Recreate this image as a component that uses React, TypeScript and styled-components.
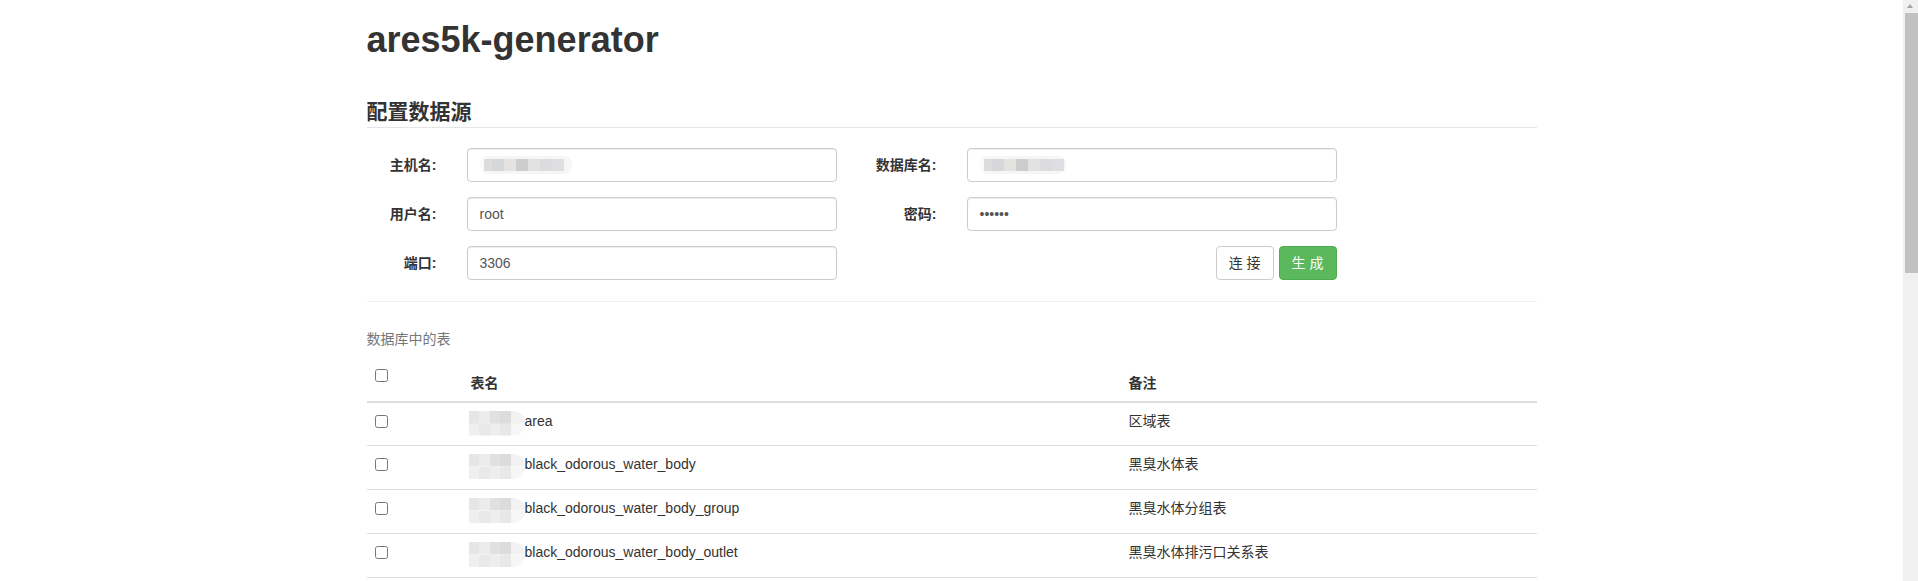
import React from "react";
import styled, { createGlobalStyle } from "styled-components";

const GlobalStyle = createGlobalStyle`
  * { box-sizing: border-box; }
  html, body { margin: 0; padding: 0; background: #fff; }
  body {
    font-family: "Liberation Sans", "Noto Sans CJK SC", sans-serif;
    font-size: 14px;
    line-height: 1.42857143;
    color: #333;
  }
`;

const Page = styled.div`
  padding-right: 15px;
`;

const ScrollTrack = styled.div`
  position: fixed;
  top: 0;
  right: 0;
  width: 15px;
  height: 100vh;
  background: #f0f0f0;
  z-index: 10;
`;

const ScrollArrow = styled.div`
  position: absolute;
  top: 4px;
  left: 4px;
  width: 0;
  height: 0;
  border-left: 3.5px solid transparent;
  border-right: 3.5px solid transparent;
  border-bottom: 4px solid #a3a3a3;
`;

const ScrollThumb = styled.div`
  position: absolute;
  top: 13px;
  left: 2px;
  right: 0;
  height: 260px;
  background: #c1c1c1;
`;

const Container = styled.div`
  width: 1170px;
  margin: 0 auto;
  padding-bottom: 20px;
`;

const Title = styled.h1`
  margin: 20px 0 10px;
  font-size: 36px;
  line-height: 1.1;
  font-weight: 700;
  color: #333;
`;

const Fieldset = styled.fieldset`
  margin: 37px 0 0;
  padding: 0;
  border: 0;
  min-width: 0;
`;

const Legend = styled.legend`
  display: block;
  width: 100%;
  padding: 0;
  margin-bottom: 20px;
  font-size: 21px;
  line-height: inherit;
  font-weight: 700;
  color: #333;
  border: 0;
  border-bottom: 1px solid #e5e5e5;
`;

const FormGrid = styled.div`
  display: grid;
  grid-template-columns: 70px 370px 70px 370px;
  column-gap: 30px;
  row-gap: 15px;
`;

const Label = styled.label`
  padding-top: 7px;
  text-align: right;
  font-weight: 700;
  white-space: nowrap;
`;

const Field = styled.div`
  position: relative;
`;

const Input = styled.input`
  display: block;
  width: 100%;
  height: 34px;
  padding: 6px 12px;
  font-family: inherit;
  font-size: 14px;
  line-height: 1.42857143;
  color: #555;
  background: #fff;
  border: 1px solid #ccc;
  border-radius: 4px;
  box-shadow: inset 0 1px 1px rgba(0, 0, 0, 0.075);
  outline: none;
`;

const InputMosaic = styled.span<{ $w: number }>`
  position: absolute;
  left: 13px;
  top: 8px;
  width: ${(p) => p.$w}px;
  height: 18px;
  border-radius: 8px;
  background:
    linear-gradient(90deg, #fafafa 0 4px, #dcdcdc 4px 12px, #d6d7da 12px 24px, #e5e3e0 24px 36px, #cdcdcd 36px 48px, #e2e2e2 48px 60px, #dcdbde 60px 72px, #dddfe2 72px 84px, #f6f6f6 84px) center / 100% 12px no-repeat,
    #f6f6f6;
  filter: blur(0.4px);
`;

const Actions = styled.div`
  grid-column: 3 / 5;
  display: flex;
  justify-content: flex-end;
  gap: 5px;
`;

const Button = styled.button<{ $variant?: "default" | "success" }>`
  height: 34px;
  padding: 6px 12px;
  font-family: inherit;
  font-size: 14px;
  line-height: 1.42857143;
  border-radius: 4px;
  border: 1px solid ${(p) => (p.$variant === "success" ? "#4cae4c" : "#ccc")};
  background: ${(p) => (p.$variant === "success" ? "#5cb85c" : "#fff")};
  color: ${(p) => (p.$variant === "success" ? "#fff" : "#333")};
  cursor: pointer;
  white-space: pre;
`;

const Rule = styled.hr`
  margin: 21px 0 19px;
  border: 0;
  border-top: 1px solid #eee;
`;

const Table = styled.table`
  width: 100%;
  border-collapse: collapse;
  border-spacing: 0;
`;

const Caption = styled.caption`
  padding: 8px 0;
  color: #777;
  text-align: left;
`;

const Th = styled.th<{ $w?: number }>`
  width: ${(p) => (p.$w ? `${p.$w}px` : "auto")};
  height: 45px;
  padding: 8px;
  text-align: left;
  vertical-align: bottom;
  font-weight: 700;
  border-bottom: 2px solid #ddd;
`;

const HeadCheckCell = styled(Th)`
  vertical-align: top;
`;

const Td = styled.td`
  height: 44px;
  padding: 8px;
  vertical-align: top;
  border-top: 1px solid #ddd;
`;

const Check = styled.input`
  margin: 4px 0 0 0;
  width: 13px;
  height: 13px;
  vertical-align: top;
`;

const NameWrap = styled.span`
  display: flex;
  align-items: flex-start;
  height: 20px;
`;

const Mosaic = styled.span`
  flex: none;
  display: block;
  width: 56px;
  height: 25px;
  margin-left: -2px;
  border-radius: 0 12px 12px 0;
  background:
    linear-gradient(90deg, #e6e6e6 0 10px, #ececec 10px 21px, #e1e1e1 21px 31px, #dcdcdc 31px 42px, #f2f2f2 42px) top / 100% 50% no-repeat,
    linear-gradient(90deg, #efefef 0 10px, #e9e9e9 10px 21px, #eeeeee 21px 31px, #e8e8e8 31px 42px, #f6f6f6 42px) bottom / 100% 50% no-repeat;
  filter: blur(0.5px);
`;

const rows: [string, string][] = [
  ["area", "区域表"],
  ["black_odorous_water_body", "黑臭水体表"],
  ["black_odorous_water_body_group", "黑臭水体分组表"],
  ["black_odorous_water_body_outlet", "黑臭水体排污口关系表"],
  ["black_odorous_water_body_photo", "黑臭水体照片表"],
  ["black_odorous_water_body_river", "黑臭水体河流关系表"],
  ["dict", "字典表"],
  ["dict_type", "字典类型表"],
  ["inspection", "巡查表"],
  ["inspection_record", "巡查记录表"],
  ["monitor_data", "监测数据表"],
  ["monitor_point", "监测点表"],
  ["outlet", "排污口表"],
  ["river", "河流表"],
  ["sys_menu", "菜单表"],
  ["sys_role", "角色表"],
  ["sys_user", "用户表"],
  ["water_quality", "水质表"],
];

export default function App() {
  return (
    <>
      <GlobalStyle />
      <ScrollTrack>
        <ScrollArrow />
        <ScrollThumb />
      </ScrollTrack>
      <Page>
        <Container>
          <Title>ares5k-generator</Title>
          <Fieldset>
            <Legend>配置数据源</Legend>
            <FormGrid>
              <Label>主机名:</Label>
              <Field>
                <Input type="text" defaultValue="" />
                <InputMosaic $w={92} />
              </Field>
              <Label>数据库名:</Label>
              <Field>
                <Input type="text" defaultValue="" />
                <InputMosaic $w={86} />
              </Field>

              <Label>用户名:</Label>
              <Field>
                <Input type="text" defaultValue="root" />
              </Field>
              <Label>密码:</Label>
              <Field>
                <Input type="password" defaultValue="123456" />
              </Field>

              <Label>端口:</Label>
              <Field>
                <Input type="text" defaultValue="3306" />
              </Field>
              <Actions>
                <Button type="button">{"连 接"}</Button>
                <Button type="button" $variant="success">{"生 成"}</Button>
              </Actions>
            </FormGrid>
          </Fieldset>
          <Rule />
          <Table>
            <Caption>数据库中的表</Caption>
            <thead>
              <tr>
                <HeadCheckCell $w={96}>
                  <Check type="checkbox" />
                </HeadCheckCell>
                <Th $w={658}>表名</Th>
                <Th>备注</Th>
              </tr>
            </thead>
            <tbody>
              {rows.map(([name, note]) => (
                <tr key={name}>
                  <Td>
                    <Check type="checkbox" />
                  </Td>
                  <Td>
                    <NameWrap>
                      <Mosaic />
                      {name}
                    </NameWrap>
                  </Td>
                  <Td>{note}</Td>
                </tr>
              ))}
            </tbody>
          </Table>
        </Container>
      </Page>
    </>
  );
}
